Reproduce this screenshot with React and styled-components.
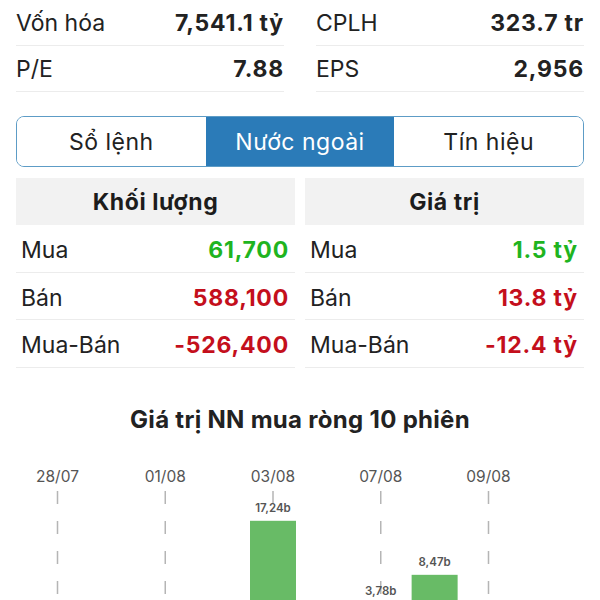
import styled, { createGlobalStyle } from "styled-components";

const GlobalStyle = createGlobalStyle`
  body {
    margin: 0;
    background: #fff;
    font-family: Inter, "Liberation Sans", sans-serif;
    color: #1c1c1e;
  }
`;

const stats = [
  [
    { label: "Vốn hóa", value: "7,541.1 tỷ" },
    { label: "P/E", value: "7.88" },
  ],
  [
    { label: "CPLH", value: "323.7 tr" },
    { label: "EPS", value: "2,956" },
  ],
];

const tabs = ["Sổ lệnh", "Nước ngoài", "Tín hiệu"];

const foreign = [
  {
    title: "Khối lượng",
    rows: [
      { label: "Mua", value: "61,700", tone: "up" },
      { label: "Bán", value: "588,100", tone: "down" },
      { label: "Mua-Bán", value: "-526,400", tone: "down" },
    ],
  },
  {
    title: "Giá trị",
    rows: [
      { label: "Mua", value: "1.5 tỷ", tone: "up" },
      { label: "Bán", value: "13.8 tỷ", tone: "down" },
      { label: "Mua-Bán", value: "-12.4 tỷ", tone: "down" },
    ],
  },
];

const sessions = [
  { date: "28/07", value: -4.1 },
  { date: "31/07", value: -2.6 },
  { date: "01/08", value: -6.3 },
  { date: "02/08", value: -1.2 },
  { date: "03/08", value: 17.24 },
  { date: "04/08", value: -3.4 },
  { date: "07/08", value: 3.78 },
  { date: "08/08", value: 8.47 },
  { date: "09/08", value: -1.9 },
  { date: "10/08", value: -5.2 },
];

const Chart = () => {
  const slot = 53.875;
  const x0 = 41.5;
  const base = 176;
  const scale = 6.16;
  return (
    <ChartSvg width="568" height="150" viewBox="0 0 568 150">
      {sessions.map((s, i) =>
        i % 2 === 0 ? (
          <g key={"d" + s.date}>
            <text x={x0 + i * slot} y="31" textAnchor="middle" fontSize="15.5" fill="#555">
              {s.date}
            </text>
            <line
              x1={x0 + i * slot}
              x2={x0 + i * slot}
              y1="40"
              y2="150"
              stroke="#b5b5b5"
              strokeWidth="1.5"
              strokeDasharray="13 17"
            />
          </g>
        ) : null
      )}
      {sessions.map((s, i) => {
        const h = Math.abs(s.value) * scale;
        const top = s.value > 0 ? base - h : base;
        return (
          <g key={"b" + s.date}>
            <rect x={x0 + i * slot - 23} y={top} width="46" height={h} fill="#68bb66" />
            {s.value > 0 && (
              <text
                x={x0 + i * slot}
                y={top - 9}
                textAnchor="middle"
                fontSize="11.5"
                fontWeight="600"
                fill="#555"
              >
                {s.value.toFixed(2).replace(".", ",")}b
              </text>
            )}
          </g>
        );
      })}
    </ChartSvg>
  );
};

export default function App() {
  return (
    <Page>
      <GlobalStyle />
      <StatsGrid>
        {stats.map((col, c) => (
          <StatCol key={c}>
            {col.map((s) => (
              <StatRow key={s.label}>
                <StatLabel>{s.label}</StatLabel>
                <StatValue>{s.value}</StatValue>
              </StatRow>
            ))}
          </StatCol>
        ))}
      </StatsGrid>
      <Tabs>
        {tabs.map((t, i) => (
          <Tab key={t} $active={i === 1}>
            {t}
          </Tab>
        ))}
      </Tabs>
      <TableGrid>
        {foreign.map((col) => (
          <TableCol key={col.title}>
            <TableHead>{col.title}</TableHead>
            {col.rows.map((r) => (
              <TableRow key={r.label}>
                <RowLabel>{r.label}</RowLabel>
                <RowValue $tone={r.tone}>{r.value}</RowValue>
              </TableRow>
            ))}
          </TableCol>
        ))}
      </TableGrid>
      <ChartTitle>Giá trị NN mua ròng 10 phiên</ChartTitle>
      <Chart />
    </Page>
  );
}

const Page = styled.div`
  width: 600px;
  height: 600px;
  overflow: hidden;
  padding: 0 16px;
  box-sizing: border-box;
`;

const StatsGrid = styled.div`
  display: grid;
  grid-template-columns: 268px 268px;
  column-gap: 32px;
`;

const StatCol = styled.div`
  display: flex;
  flex-direction: column;
`;

const StatRow = styled.div`
  height: 46px;
  box-sizing: border-box;
  display: flex;
  align-items: center;
  justify-content: space-between;
  border-bottom: 1px solid #ececec;
  font-size: 23px;
`;

const StatLabel = styled.span`
  color: #222;
`;

const StatValue = styled.span`
  font-weight: 700;
  letter-spacing: 0.8px;
  color: #222;
`;

const Tabs = styled.div`
  margin-top: 24px;
  height: 51px;
  box-sizing: border-box;
  display: flex;
  border: 1.5px solid #5d9cc6;
  border-radius: 8px;
  overflow: hidden;
`;

const Tab = styled.div`
  flex: 1;
  display: flex;
  align-items: center;
  justify-content: center;
  font-size: 23px;
  letter-spacing: 0.5px;
  background: ${(p) => (p.$active ? "#2b7bb8" : "#fff")};
  color: ${(p) => (p.$active ? "#fff" : "#222")};
`;

const TableGrid = styled.div`
  margin-top: 11px;
  display: grid;
  grid-template-columns: 279px 279px;
  column-gap: 10px;
`;

const TableCol = styled.div`
  display: flex;
  flex-direction: column;
`;

const TableHead = styled.div`
  height: 47px;
  display: flex;
  align-items: center;
  justify-content: center;
  background: #f2f2f2;
  font-size: 23px;
  font-weight: 700;
  letter-spacing: 0.6px;
  color: #1c1c1c;
`;

const TableRow = styled.div`
  height: 47.5px;
  box-sizing: border-box;
  display: flex;
  align-items: center;
  justify-content: space-between;
  padding: 4px 6px 0 5px;
  border-bottom: 1px solid #ececec;
  font-size: 23px;
`;

const RowLabel = styled.span`
  color: #222;
`;

const RowValue = styled.span`
  font-weight: 700;
  letter-spacing: 0.8px;
  color: ${(p) => (p.$tone === "up" ? "#1fb41f" : "#c40f1c")};
`;

const ChartTitle = styled.div`
  margin-top: 38px;
  text-align: center;
  font-size: 24px;
  font-weight: 700;
  letter-spacing: 0.3px;
  line-height: 28px;
  color: #222;
`;

const ChartSvg = styled.svg`
  display: block;
  margin-top: 17px;
  font-family: Inter, "Liberation Sans", sans-serif;
`;
